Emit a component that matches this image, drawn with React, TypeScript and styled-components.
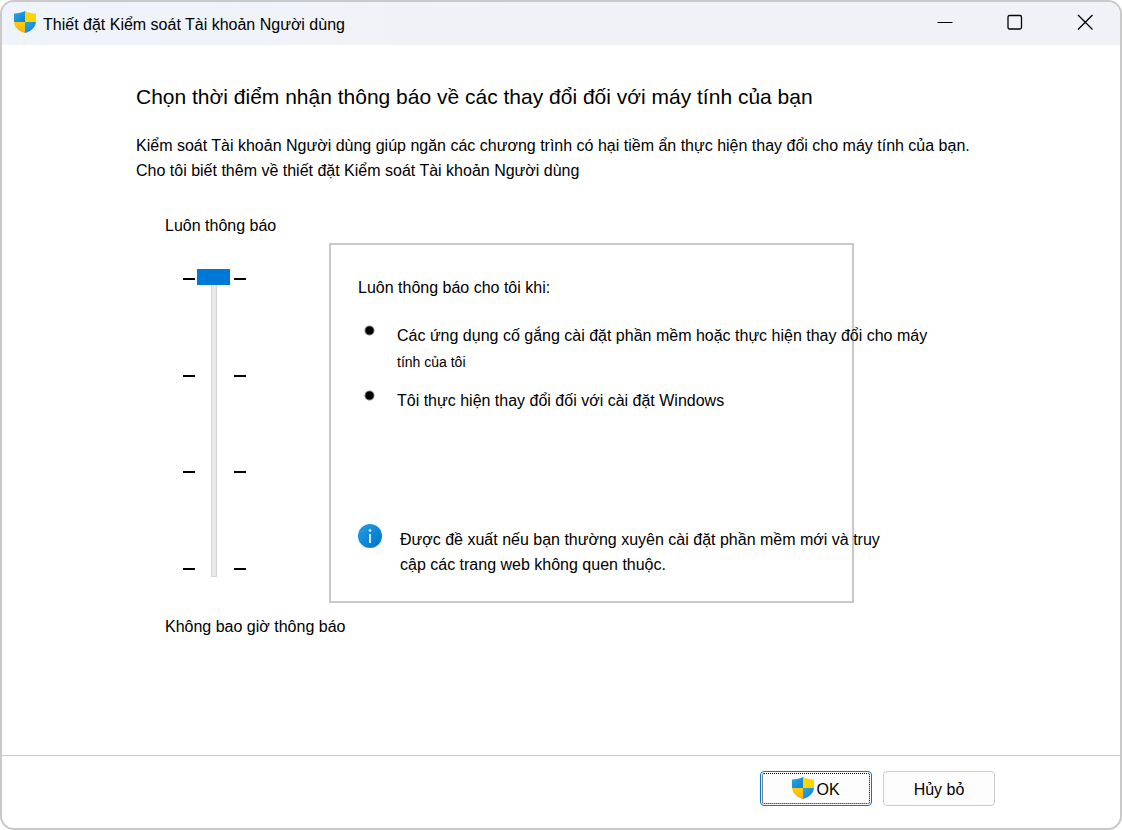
import React, { useState } from "react";
import styled, { createGlobalStyle } from "styled-components";

const GlobalStyle = createGlobalStyle`
  *, *::before, *::after { box-sizing: border-box; }
  body {
    margin: 0;
    background: #fff;
    color: #000;
    font: 16px/25px "Liberation Sans", Arial, sans-serif;
  }
  h1, h2, p, ul { margin: 0; padding: 0; font-weight: 400; }
  button { font: inherit; color: inherit; }
  svg { flex: none; }
`;

const Window = styled.div`
  display: flex;
  flex-direction: column;
  min-height: 100vh;
  border: 2px solid #c9c9c9;
  border-radius: 14px;
  overflow: hidden;
  background: #fff;
`;

const TitleBar = styled.header`
  display: flex;
  align-items: center;
  height: 43px;
  padding: 0 0 3px 12px;
  background: linear-gradient(90deg, #eff3fb, #f1f2f7 50%);
`;

const WindowTitle = styled.h1`
  flex: 1;
  padding-top: 4px;
  margin-left: 7px;
  font-size: 16px;
  white-space: nowrap;
`;

const CaptionButton = styled.button`
  display: grid;
  place-items: center;
  width: 70px;
  height: 100%;
  padding: 0;
  border: 0;
  background: transparent;
`;

const Content = styled.main`
  flex: 1;
  padding: 39px 125px 40px 134px;
`;

const Heading = styled.h2`
  font-size: 21px;
  line-height: 26px;
  margin-bottom: 23px;
  white-space: nowrap;
`;

const Intro = styled.p`
  white-space: nowrap;
`;

const HelpLink = styled.a`
  color: inherit;
  text-decoration: none;
`;

const Settings = styled.section`
  display: flex;
  align-items: flex-start;
  margin: 30px 141px 0 29px;
`;

const LevelColumn = styled.div`
  flex: none;
  width: 164px;
  white-space: nowrap;
`;

const LevelLabel = styled.label`
  display: block;
`;

const SliderRow = styled.div`
  display: flex;
  height: 308px;
  margin: 31px 0 37px 18px;
`;

const Ticks = styled.div`
  display: flex;
  flex-direction: column;
  justify-content: space-between;
  width: 12px;
  padding: 9px 0 7px;
`;

const Tick = styled.i`
  height: 2px;
  background: #000;
`;

const Slider = styled.input`
  appearance: none;
  writing-mode: vertical-lr;
  direction: rtl;
  width: 33px;
  height: 308px;
  margin: 0 4px 0 2px;
  background: transparent;

  &::-webkit-slider-runnable-track {
    width: 6px;
    height: 308px;
    background: #e7eae9;
    box-shadow: inset 0 0 0 1px #d3d5d4;
  }

  &::-webkit-slider-thumb {
    appearance: none;
    width: 33px;
    height: 16px;
    margin-left: -14px;
    background: #0078d7;
  }
`;

const Panel = styled.div`
  flex: 1;
  display: flex;
  flex-direction: column;
  min-width: 0;
  min-height: 360px;
  margin-top: 30px;
  padding: 30px 27px 24px;
  border: 2px solid #c9c9c9;
  white-space: nowrap;
`;

const Conditions = styled.ul`
  display: flex;
  flex-direction: column;
  gap: 13px;
  margin-top: 23px;
  list-style: none;
`;

const Condition = styled.li`
  display: flex;
  align-items: flex-start;
  gap: 22px;
  padding-left: 6px;
  line-height: 26px;
`;

const Bullet = styled.span`
  flex: none;
  width: 11px;
  height: 11px;
  margin-top: 2px;
  border-radius: 50%;
  background: radial-gradient(circle closest-side, #000 65%, transparent);
`;

const SmallLine = styled.span`
  font-size: 14px;
`;

const Advice = styled.div`
  display: flex;
  align-items: flex-start;
  gap: 18px;
  margin-top: auto;
`;

const AdviceText = styled.p`
  padding-top: 3px;
`;

const Footer = styled.footer`
  display: flex;
  justify-content: flex-end;
  gap: 11px;
  padding: 15px 125px 22px;
  border-top: 1px solid #c9c9c9;
`;

const ActionButton = styled.button<{ $primary?: boolean }>`
  display: flex;
  align-items: center;
  justify-content: center;
  gap: 2px;
  width: 112px;
  height: 35px;
  padding: 0 0 2px;
  border: 1px solid ${(p) => (p.$primary ? "#0078d4" : "#cbcbcb")};
  border-radius: 4px;
  background: #fdfdfd;
  outline: ${(p) => (p.$primary ? "1px dotted #000" : "none")};
  outline-offset: -3px;
`;

const ButtonText = styled.span`
  padding-top: 3px;
`;

function Shield({ id }: { id: string }) {
  return (
    <svg width="22" height="22" viewBox="0 0 22 22" aria-hidden="true">
      <defs>
        <clipPath id={`${id}-clip`}>
          <path d="M11 0C8.500 1.600 4.500 2.500 0 2.500V10C0 16 4.500 20 11 22C17.500 20 22 16 22 10V2.500C17.500 2.500 13.500 1.600 11 0Z" />
        </clipPath>
        <linearGradient id={`${id}-blue`} x1="0" y1="0" x2="1" y2="1">
          <stop offset="0" stopColor="#2aa7e5" />
          <stop offset="1" stopColor="#0d80d3" />
        </linearGradient>
        <linearGradient id={`${id}-gold`} x1="0" y1="0" x2="0" y2="1">
          <stop offset="0" stopColor="#ffd000" />
          <stop offset="1" stopColor="#f6ae16" />
        </linearGradient>
      </defs>
      <g clipPath={`url(#${id}-clip)`}>
        <rect width="11" height="11" fill={`url(#${id}-blue)`} />
        <rect x="11" width="11" height="11" fill="#ffd500" />
        <rect y="11" width="11" height="11" fill={`url(#${id}-gold)`} />
        <rect x="11" y="11" width="11" height="11" fill={`url(#${id}-blue)`} />
      </g>
    </svg>
  );
}

function InfoIcon() {
  return (
    <svg width="24" height="24" viewBox="0 0 24 24" aria-hidden="true">
      <defs>
        <linearGradient id="info-fill" x1="0" y1="0" x2="1" y2="1">
          <stop offset="0" stopColor="#23a1e3" />
          <stop offset="1" stopColor="#0070cf" />
        </linearGradient>
      </defs>
      <circle cx="12" cy="12" r="12" fill="url(#info-fill)" />
      <circle cx="12" cy="6.500" r="1.300" fill="#fff" />
      <rect x="11.200" y="10" width="1.600" height="9" fill="#fff" />
    </svg>
  );
}

export default function App() {
  const [level, setLevel] = useState(3);
  const ticks = [3, 2, 1, 0].map((n) => <Tick key={n} />);

  return (
    <>
      <GlobalStyle />
      <Window>
        <TitleBar>
          <Shield id="title" />
          <WindowTitle>Thiết đặt Kiểm soát Tài khoản Người dùng</WindowTitle>
          <CaptionButton aria-label="Thu nhỏ">
            <svg width="16" height="16" viewBox="0 0 16 16">
              <path d="M0.500 8.500H15.500" stroke="#000" />
            </svg>
          </CaptionButton>
          <CaptionButton aria-label="Phóng to">
            <svg width="16" height="16" viewBox="0 0 16 16">
              <rect x="1" y="1.500" width="13.500" height="13.500" rx="1.500" fill="none" stroke="#000" strokeWidth="1.300" />
            </svg>
          </CaptionButton>
          <CaptionButton aria-label="Đóng">
            <svg width="16" height="16" viewBox="0 0 16 16">
              <path d="M1 1L15.500 15.500M15.500 1L1 15.500" stroke="#000" strokeWidth="1.300" />
            </svg>
          </CaptionButton>
        </TitleBar>

        <Content>
          <Heading>Chọn thời điểm nhận thông báo về các thay đổi đối với máy tính của bạn</Heading>
          <Intro>
            Kiểm soát Tài khoản Người dùng giúp ngăn các chương trình có hại tiềm ẩn thực hiện thay đổi cho máy tính của bạn.
            <br />
            <HelpLink href="#help">Cho tôi biết thêm về thiết đặt Kiểm soát Tài khoản Người dùng</HelpLink>
          </Intro>

          <Settings>
            <LevelColumn>
              <LevelLabel htmlFor="level">Luôn thông báo</LevelLabel>
              <SliderRow>
                <Ticks>{ticks}</Ticks>
                <Slider
                  id="level"
                  type="range"
                  min={0}
                  max={3}
                  step={1}
                  value={level}
                  onChange={(e) => setLevel(Number(e.target.value))}
                />
                <Ticks>{ticks}</Ticks>
              </SliderRow>
              <LevelLabel htmlFor="level">Không bao giờ thông báo</LevelLabel>
            </LevelColumn>

            <Panel>
              <p>Luôn thông báo cho tôi khi:</p>
              <Conditions>
                <Condition>
                  <Bullet />
                  <p>
                    Các ứng dụng cố gắng cài đặt phần mềm hoặc thực hiện thay đổi cho máy
                    <br />
                    <SmallLine>tính của tôi</SmallLine>
                  </p>
                </Condition>
                <Condition>
                  <Bullet />
                  <p>Tôi thực hiện thay đổi đối với cài đặt Windows</p>
                </Condition>
              </Conditions>
              <Advice>
                <InfoIcon />
                <AdviceText>
                  Được đề xuất nếu bạn thường xuyên cài đặt phần mềm mới và truy
                  <br />
                  cập các trang web không quen thuộc.
                </AdviceText>
              </Advice>
            </Panel>
          </Settings>
        </Content>

        <Footer>
          <ActionButton $primary>
            <Shield id="ok" />
            <ButtonText>OK</ButtonText>
          </ActionButton>
          <ActionButton>
            <ButtonText>Hủy bỏ</ButtonText>
          </ActionButton>
        </Footer>
      </Window>
    </>
  );
}
